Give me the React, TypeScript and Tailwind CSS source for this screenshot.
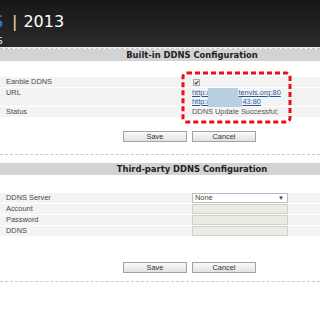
import React from "react";

const sans = { fontFamily: '"Liberation Sans", Arial, sans-serif' };
const dv = { fontFamily: '"DejaVu Sans", Verdana, sans-serif' };

function SectionBar({ title }: { title: string }) {
  return (
    <div
      className="h-[12px] bg-[#d3d3d3] pl-[64px] text-center text-[8.4px] font-bold leading-[12px] text-[#222]"
      style={dv}
    >
      {title}
    </div>
  );
}

function Buttons() {
  return (
    <div className="flex gap-[5px] pl-[123px]">
      {["Save", "Cancel"].map((t) => (
        <div
          key={t}
          className="flex h-[11px] w-[64px] items-center justify-center border border-[#a3a3a3] bg-gradient-to-b from-[#fafafa] to-[#e2e2e2] text-[7.4px] leading-none text-[#333]"
        >
          {t}
        </div>
      ))}
    </div>
  );
}

function Row({
  label,
  children,
  h = 10,
}: {
  label: string;
  children?: React.ReactNode;
  h?: number;
}) {
  return (
    <div className="flex bg-[#f3f3f3] mb-[1px]" style={{ height: h }}>
      <div className="w-[192px] pl-[6px] text-[7.4px] leading-[10px] text-[#4a4a4a]">
        {label}
      </div>
      <div className="flex-1 text-[7.4px] leading-[10px] text-[#555]">{children}</div>
    </div>
  );
}

export default function App() {
  return (
    <div className="relative h-[320px] w-[320px] overflow-hidden bg-white" style={sans}>
      {/* Header */}
      <div className="h-[47px] bg-gradient-to-b from-[#171717] to-[#2b2b2b] pt-[11px]" style={dv}>
        <div className="flex h-[21px] items-center text-[16px] leading-none">
          <span className="inline-block w-[4px] overflow-hidden">
            <span className="ml-[-7px] inline-block text-[#2a8de3]">S</span>
          </span>
          <span className="ml-[8px] text-[#f2dcb8]">|</span>
          <span className="ml-[6px] text-white">2013</span>
        </div>
        <div className="mt-[5px] h-[9px] text-[9px] leading-none">
          <span className="inline-block w-[4px] overflow-hidden">
            <span className="ml-[-3px] inline-block text-[#e8e8e8]">S</span>
          </span>
        </div>
      </div>
      <div className="h-[1px] bg-[#e9e9e9]" />
      <div className="border-t border-dashed border-[#c9c9c9]" />
      <SectionBar title="Built-in DDNS Configuration" />

      <div className="mt-[16px]">
        <Row label="Eanble DDNS">
          <div className="flex h-[10px] items-center pl-[1px]">
            <div className="flex h-[7px] w-[7px] items-center justify-center border border-[#a8a8a8] bg-[#ececec]">
              <svg width="5" height="5" viewBox="0 0 5 5">
                <path d="M0.6 2.6 L2 4 L4.4 1" stroke="#333" strokeWidth="1.1" fill="none" />
              </svg>
            </div>
          </div>
        </Row>
        <Row label="URL" h={18}>
          <div className="pt-[-1px] text-[7.4px] leading-[9px] text-[#1f5d97]">
            <div className="flex h-[9px] items-center">
              <span className="underline">http:/</span>
              <span className="inline-block h-[10px] w-[30px] bg-[#b7d0e1]" />
              <span className="underline">tenvis.org:80</span>
            </div>
            <div className="flex h-[9px] items-center">
              <span className="underline">http:/</span>
              <span className="inline-block h-[10px] w-[34px] bg-[#b7d0e1]" />
              <span className="underline">43:80</span>
            </div>
          </div>
        </Row>
        <Row label="Status">DDNS Update Successful;</Row>
      </div>

      <div className="mt-[14px]">
        <Buttons />
      </div>

      <div className="mt-[12px] border-t border-dashed border-[#c9c9c9]" />
      <div className="mt-[8px]">
        <SectionBar title="Third-party DDNS Configuration" />
      </div>

      <div className="mt-[18px]">
        <div className="flex h-[10px] bg-[#f3f3f3] mb-[1px]">
          <div className="w-[192px] pl-[6px] text-[7.4px] leading-[10px] text-[#4a4a4a]">DDNS Server</div>
          <div className="flex h-[10px] w-[96px] items-center justify-between border border-[#bdbdbd] bg-white pl-[2px] pr-[3px] text-[7.4px] text-[#444]">
            <span>None</span>
            <span className="text-[6px]">▼</span>
          </div>
        </div>
        {["Account", "Password", "DDNS"].map((l) => (
          <div key={l} className="flex h-[10px] bg-[#f3f3f3] mb-[1px]">
            <div className="w-[192px] pl-[6px] text-[7.4px] leading-[10px] text-[#4a4a4a]">{l}</div>
            <div className="h-[10px] w-[96px] border border-[#cfcfc8] bg-[#ebebe4]" />
          </div>
        ))}
      </div>

      <div className="mt-[26px]">
        <Buttons />
      </div>
      <div className="mt-[8px] border-t border-dashed border-[#c9c9c9]" />

      {/* red annotation */}
      <svg className="absolute left-[181px] top-[71px]" width="111" height="53" viewBox="0 0 111 53">
        <rect
          x="2"
          y="2"
          width="107"
          height="49"
          rx="4"
          fill="none"
          stroke="#e8101a"
          strokeWidth="3"
          strokeDasharray="5 3"
        />
      </svg>
    </div>
  );
}
